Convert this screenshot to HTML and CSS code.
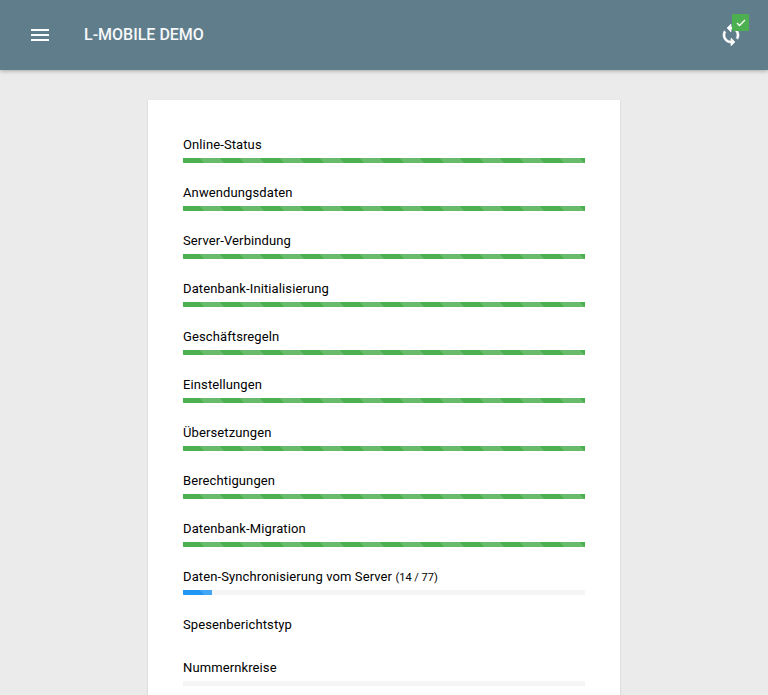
FILE: index.html
```html
<!DOCTYPE html>
<html lang="de">
<head>
<meta charset="utf-8">
<title>L-mobile Demo</title>
<link rel="stylesheet" href="styles.css">
</head>
<body>
<header class="header">
  <div class="menu"><i></i><i></i><i></i></div>
  <h1 class="title">L-MOBILE DEMO</h1>
  <div class="sync">
    <svg class="sync-icon" width="24" height="24" viewBox="0 0 24 24"><path fill="#fff" stroke="#fff" stroke-width=".6" stroke-linejoin="round" d="M12 4V1L8 5l4 4V6c3.300 0 6 2.700 6 6 0 1-.25 1.970-.7 2.800l1.460 1.460C19.540 15.030 20 13.570 20 12c0-4.420-3.580-8-8-8zm0 14c-3.310 0-6-2.690-6-6 0-1 .25-1.970.7-2.800L5.240 7.740C4.460 8.970 4 10.430 4 12c0 4.420 3.580 8 8 8v3l4-4-4-4v3z"/></svg>
    <span class="badge"><svg width="10" height="8" viewBox="0 0 10 8"><path d="M1 4l2.500 2.500L9 1" fill="none" stroke="#fff" stroke-width="1.300"/></svg></span>
  </div>
</header>
<main class="card">
  <div class="step"><p>Online-Status</p><div class="progress"><div class="bar done"></div></div></div>
  <div class="step"><p>Anwendungsdaten</p><div class="progress"><div class="bar done"></div></div></div>
  <div class="step"><p>Server-Verbindung</p><div class="progress"><div class="bar done"></div></div></div>
  <div class="step"><p>Datenbank-Initialisierung</p><div class="progress"><div class="bar done"></div></div></div>
  <div class="step"><p>Geschäftsregeln</p><div class="progress"><div class="bar done"></div></div></div>
  <div class="step"><p>Einstellungen</p><div class="progress"><div class="bar done"></div></div></div>
  <div class="step"><p>Übersetzungen</p><div class="progress"><div class="bar done"></div></div></div>
  <div class="step"><p>Berechtigungen</p><div class="progress"><div class="bar done"></div></div></div>
  <div class="step"><p>Datenbank-Migration</p><div class="progress"><div class="bar done"></div></div></div>
  <div class="step"><p>Daten-Synchronisierung vom Server <small>(14 / 77)</small></p><div class="progress"><div class="bar active"></div></div></div>
  <div class="step plain"><p>Spesenberichtstyp</p></div>
  <div class="step"><p>Nummernkreise</p><div class="progress"></div></div>
</main>
</body>
</html>
```
FILE: styles.css
```css
* { box-sizing: border-box; }
body { margin: 0; height: 695px; overflow: hidden; background: #ebebeb; color: #000; font: 13px/18px Roboto, sans-serif; }
.header { position: relative; display: flex; align-items: center; height: 70px; padding: 0 19px 0 31px; background: #607d8b; box-shadow: 0 1px 4px rgba(0,0,0,.3); }
.menu { display: flex; flex-direction: column; gap: 3px; width: 18px; }
.menu i { height: 2px; background: #fff; }
.title { margin: 0 auto 0 35px; color: #f6f8f9; font-size: 16px; font-weight: 500; line-height: 20px; }
.sync { position: relative; width: 30px; height: 24px; }
.sync-icon { display: block; }
.badge { position: absolute; left: 13px; top: -9px; width: 17px; height: 17px; background: #4caf50; border-radius: 1px; display: flex; align-items: center; justify-content: center; }
.card { width: 472px; height: 595px; margin: 30px auto 0; padding: 36px 35px 0; background: #fff; box-shadow: 0 1px 2px rgba(0,0,0,.15); }
.step { height: 48px; }
.step.plain { height: 43px; }
.step:last-child { height: 31px; }
.step p { height: 18px; margin: 0 0 4px; letter-spacing: .11px; }
.step small { font-size: 11px; letter-spacing: 0; }
.progress { height: 5px; background: #f5f5f5; }
.bar { height: 5px; background-image: linear-gradient(45deg, rgba(255,255,255,.15) 25%, transparent 25%, transparent 50%, rgba(255,255,255,.15) 50%, rgba(255,255,255,.15) 75%, transparent 75%, transparent); background-position: 17px 0; background-size: 40px 40px; }
.done { width: 100%; background-color: #4caf50; }
.active { width: 29px; background-color: #2196f3; }
```
